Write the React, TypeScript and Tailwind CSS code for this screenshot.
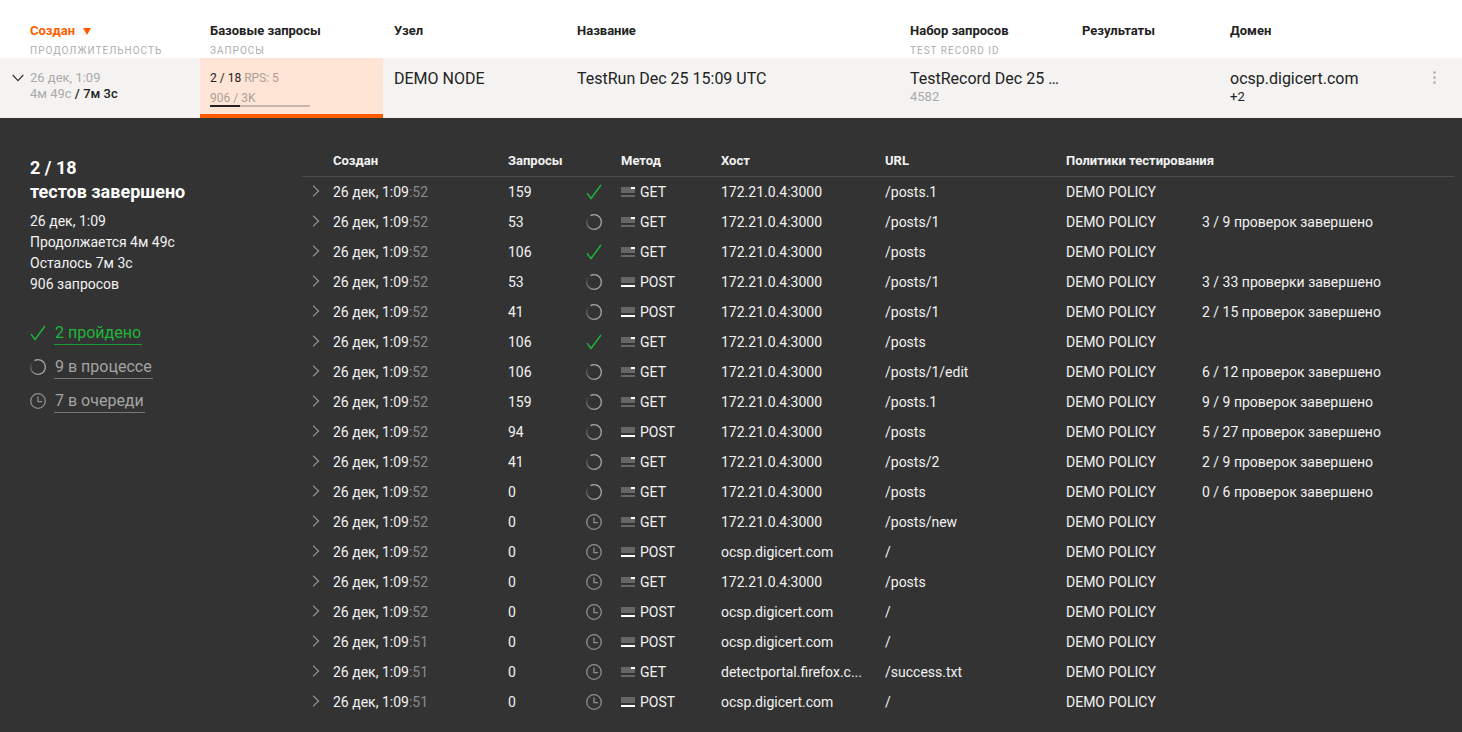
import React from "react";

const F = '[font-family:Roboto,"Noto_Sans",sans-serif]';

function Check({ className = "" }: { className?: string }) {
  return (
    <svg width="16" height="16" viewBox="0 0 16 16" fill="none" className={className}>
      <path d="M1 9.2 L5 14.5 L15 1" stroke="#1fb53a" strokeWidth="1.4" />
    </svg>
  );
}

function Spinner() {
  const segs = [];
  const n = 36;
  const r = 7.3;
  for (let i = 0; i < n; i++) {
    const a0 = (i / n) * Math.PI * 2 - Math.PI * 0.5 - 0.5;
    const a1 = ((i + 1.2) / n) * Math.PI * 2 - Math.PI * 0.5 - 0.5;
    const p = i / n;
    const op = p < 0.5 ? 1 : Math.max(0, 1 - (p - 0.5) / 0.45);
    segs.push(
      <path
        key={i}
        d={`M${8 + r * Math.cos(a0)} ${8 + r * Math.sin(a0)} A${r} ${r} 0 0 1 ${8 + r * Math.cos(a1)} ${8 + r * Math.sin(a1)}`}
        stroke="#a8a8a8"
        strokeOpacity={op}
        strokeWidth="1.3"
        fill="none"
      />
    );
  }
  return (
    <svg width="16" height="16" viewBox="0 0 16 16">
      {segs}
    </svg>
  );
}

function Clock() {
  return (
    <svg width="16" height="16" viewBox="0 0 16 16" fill="none" stroke="#8e8e8e" strokeWidth="1.3">
      <circle cx="8" cy="8" r="7.3" />
      <path d="M8 3.5 V8.6 H12" />
    </svg>
  );
}

function Chevron({ dir, color }: { dir: "r" | "d"; color: string }) {
  return dir === "r" ? (
    <svg width="8" height="12" viewBox="0 0 8 12" fill="none" stroke={color} strokeWidth="1.1">
      <path d="M1 0.7 L6.6 6 L1 11.3" />
    </svg>
  ) : (
    <svg width="12" height="8" viewBox="0 0 12 8" fill="none" stroke={color} strokeWidth="1.2">
      <path d="M0.7 1 L6 6.6 L11.3 1" />
    </svg>
  );
}

function MethodIcon({ m }: { m: string }) {
  return m === "GET" ? (
    <span className="flex flex-col w-[14px] h-[10px] mr-[5px]">
      <span className="flex h-[2px]">
        <span className="w-[10px] bg-[#666]" />
        <span className="w-[4px] bg-white" />
      </span>
      <span className="h-[4px] bg-[#666]" />
      <span className="h-[2px] mt-[2px] bg-[#666]" />
    </span>
  ) : (
    <span className="flex flex-col w-[14px] h-[10px] mr-[5px]">
      <span className="h-[6px] bg-[#666]" />
      <span className="h-[2px] mt-[2px] bg-white" />
    </span>
  );
}

type Row = [string, string, "ok" | "spin" | "wait", string, string, string, string];
const H = "172.21.0.4:3000";
const D = "ocsp.digicert.com";
const rows: Row[] = [
  ["52", "159", "ok", "GET", H, "/posts.1", ""],
  ["52", "53", "spin", "GET", H, "/posts/1", "3 / 9 проверок завершено"],
  ["52", "106", "ok", "GET", H, "/posts", ""],
  ["52", "53", "spin", "POST", H, "/posts/1", "3 / 33 проверки завершено"],
  ["52", "41", "spin", "POST", H, "/posts/1", "2 / 15 проверок завершено"],
  ["52", "106", "ok", "GET", H, "/posts", ""],
  ["52", "106", "spin", "GET", H, "/posts/1/edit", "6 / 12 проверок завершено"],
  ["52", "159", "spin", "GET", H, "/posts.1", "9 / 9 проверок завершено"],
  ["52", "94", "spin", "POST", H, "/posts", "5 / 27 проверок завершено"],
  ["52", "41", "spin", "GET", H, "/posts/2", "2 / 9 проверок завершено"],
  ["52", "0", "spin", "GET", H, "/posts", "0 / 6 проверок завершено"],
  ["52", "0", "wait", "GET", H, "/posts/new", ""],
  ["52", "0", "wait", "POST", D, "/", ""],
  ["52", "0", "wait", "GET", H, "/posts", ""],
  ["52", "0", "wait", "POST", D, "/", ""],
  ["51", "0", "wait", "POST", D, "/", ""],
  ["51", "0", "wait", "GET", "detectportal.firefox.c...", "/success.txt", ""],
  ["51", "0", "wait", "POST", D, "/", ""],
];

const cols = "grid grid-cols-[31px_175px_72px_41px_100px_164px_181px_136px_1fr]";

export default function App() {
  return (
    <div className={`${F} w-[1462px] h-[732px] overflow-hidden bg-white text-[#222]`}>
      {/* Header */}
      <div className="flex h-[58px] pt-[23px]">
        <div className="w-[200px] pl-[30px]">
          <div className="flex items-center h-[16px] text-[13px] font-bold text-[#ff5c00]">
            Создан
            <svg width="8" height="7" viewBox="0 0 8 7" className="ml-[8px]">
              <path d="M0 0 H8 L4 7 Z" fill="#ff5c00" />
            </svg>
          </div>
          <div className="mt-[4px] text-[10px] leading-[15px] tracking-[1px] text-[#aeaeae]">ПРОДОЛЖИТЕЛЬНОСТЬ</div>
        </div>
        <div className="w-[184px] pl-[10px]">
          <div className="h-[16px] text-[13px] leading-[16px] font-bold">Базовые запросы</div>
          <div className="mt-[4px] text-[10px] leading-[15px] tracking-[1px] text-[#aeaeae]">ЗАПРОСЫ</div>
        </div>
        <div className="w-[183px] pl-[10px] h-[16px] text-[13px] leading-[16px] font-bold">Узел</div>
        <div className="w-[333px] pl-[10px] h-[16px] text-[13px] leading-[16px] font-bold">Название</div>
        <div className="w-[172px] pl-[10px]">
          <div className="h-[16px] text-[13px] leading-[16px] font-bold">Набор запросов</div>
          <div className="mt-[4px] text-[10px] leading-[15px] tracking-[1px] text-[#aeaeae]">TEST RECORD ID</div>
        </div>
        <div className="w-[148px] pl-[10px] h-[16px] text-[13px] leading-[16px] font-bold">Результаты</div>
        <div className="pl-[10px] h-[16px] text-[13px] leading-[16px] font-bold">Домен</div>
      </div>

      {/* Summary row */}
      <div className="flex h-[60px] bg-[#f4f3f1]">
        <div className="w-[200px] flex pl-[12px] pt-[12px]">
          <div className="w-[18px] pt-[4px]">
            <Chevron dir="d" color="#333" />
          </div>
          <div className="text-[13px] leading-[16px] text-[#aaa]">
            <div>26 дек, 1:09</div>
            <div>
              4м 49с <span className="text-[#222] font-medium">/ 7м 3с</span>
            </div>
          </div>
        </div>
        <div className="w-[183px] h-[60px] bg-[#fee5d6] border-b-[4px] border-[#ff5c00] pl-[10px] pt-[13px]">
          <div className="text-[12px] leading-[14px]">
            2 / 18 <span className="text-[#ac9f97]">RPS: 5</span>
          </div>
          <div className="mt-[6px] text-[12px] leading-[14px] text-[#ac9f97]">906 / 3K</div>
          <div className="w-[100px] h-[2px] bg-[#c2b6ae]">
            <div className="w-[30px] h-[2px] bg-[#222]" />
          </div>
        </div>
        <div className="w-[184px] pl-[11px] pt-[11px] text-[16px] leading-[19px]">DEMO NODE</div>
        <div className="w-[333px] pl-[10px] pt-[11px] text-[16px] leading-[19px]">TestRun Dec 25 15:09 UTC</div>
        <div className="w-[172px] pl-[10px] pt-[11px]">
          <div className="text-[16px] leading-[19px] whitespace-nowrap">TestRecord Dec 25 …</div>
          <div className="text-[13px] leading-[17px] text-[#aaa]">4582</div>
        </div>
        <div className="w-[148px]" />
        <div className="pl-[10px] pt-[11px] w-[210px]">
          <div className="text-[16px] leading-[19px]">ocsp.digicert.com</div>
          <div className="text-[13px] leading-[17px]">+2</div>
        </div>
        <div className="pt-[13px] pl-[3px]">
          <div className="flex flex-col gap-[2px]">
            <span className="w-[3px] h-[3px] rounded-full bg-[#bbb]" />
            <span className="w-[3px] h-[3px] rounded-full bg-[#bbb]" />
            <span className="w-[3px] h-[3px] rounded-full bg-[#bbb]" />
          </div>
        </div>
      </div>

      {/* Details */}
      <div className="flex h-[614px] bg-[#333]">
        <div className="w-[302px] pl-[30px] pt-[37px] text-white">
          <div className="text-[18px] leading-[25px] font-bold">2 / 18</div>
          <div className="text-[18px] leading-[24px] font-bold">тестов завершено</div>
          <div className="mt-[7px] text-[14px] leading-[21px] text-[#f2f2f2]">
            <div>26 дек, 1:09</div>
            <div>Продолжается 4м 49с</div>
            <div>Осталось 7м 3с</div>
            <div>906 запросов</div>
          </div>
          <div className="mt-[26px] flex flex-col gap-[11px] text-[16px] leading-[23px]">
            <div className="flex items-center gap-[8px] h-[23px]">
              <Check />
              <span className="px-[1px] border-b border-[#1a9a33] text-[#1fb53a]">2 пройдено</span>
            </div>
            <div className="flex items-center gap-[8px] h-[23px]">
              <Spinner />
              <span className="px-[1px] border-b border-[#777] text-[#a3a3a3]">9 в процессе</span>
            </div>
            <div className="flex items-center gap-[8px] h-[23px]">
              <Clock />
              <span className="px-[1px] border-b border-[#777] text-[#a3a3a3]">7 в очереди</span>
            </div>
          </div>
        </div>

        <div className="w-[1152px]">
          <div className={`${cols} h-[59px] pt-[35px] border-b border-[#4d4d4d] text-[13px] leading-[16px] font-bold text-[#f2f2f2]`}>
            <div />
            <div>Создан</div>
            <div className="col-span-2">Запросы</div>
            <div>Метод</div>
            <div>Хост</div>
            <div>URL</div>
            <div className="col-span-2 whitespace-nowrap">Политики тестирования</div>
          </div>
          {rows.map((r, i) => (
            <div key={i} className={`${cols} h-[30px] items-center text-[14px] text-[#f2f2f2]`}>
              <div className="pl-[10px] pb-[3px] flex items-center">
                <Chevron dir="r" color="#999" />
              </div>
              <div>
                26 дек, 1:09<span className="text-[#8a8a8a]">:{r[0]}</span>
              </div>
              <div>{r[1]}</div>
              <div className="flex items-center pl-[6px]">
                {r[2] === "ok" ? <Check /> : r[2] === "spin" ? <Spinner /> : <Clock />}
              </div>
              <div className="flex items-center">
                <MethodIcon m={r[3]} />
                {r[3]}
              </div>
              <div className="whitespace-nowrap">{r[4]}</div>
              <div>{r[5]}</div>
              <div>DEMO POLICY</div>
              <div className="whitespace-nowrap">{r[6]}</div>
            </div>
          ))}
        </div>
      </div>
    </div>
  );
}
